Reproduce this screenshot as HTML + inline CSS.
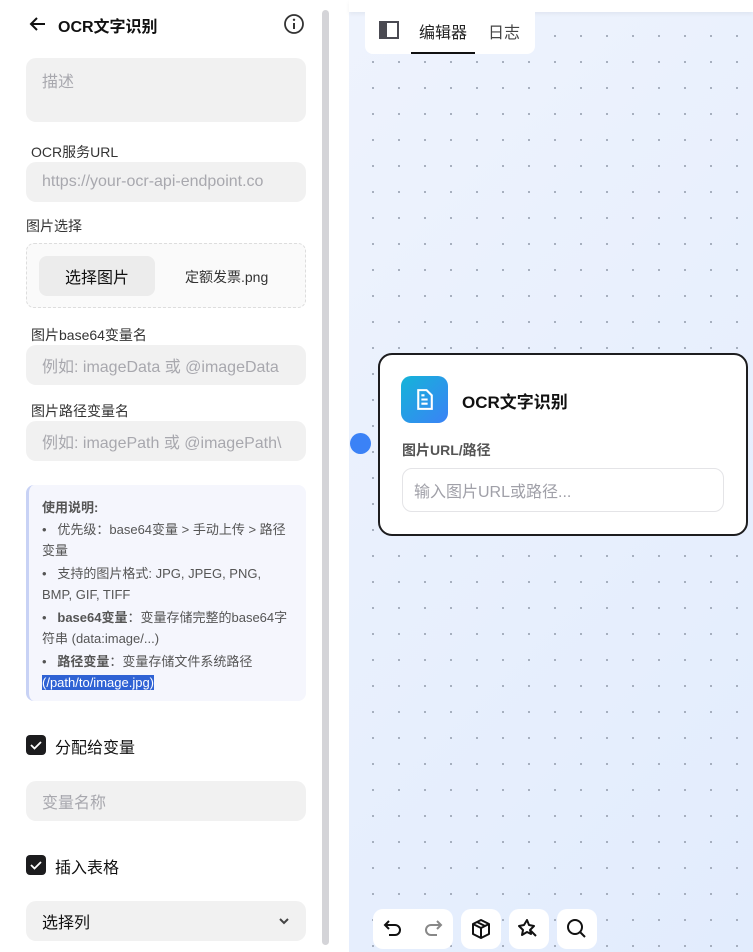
<!DOCTYPE html>
<html><head><meta charset="utf-8"><style>
*{box-sizing:border-box;margin:0;padding:0}
body{width:753px;height:952px;overflow:hidden;background:#fff;font-family:"Liberation Sans","Noto Sans CJK SC",sans-serif;position:relative;color:#222}
.abs{position:absolute}
.inp{position:absolute;left:26px;width:280px;background:#f1f1f1;border-radius:10px;color:#a8a8ae;font-size:16px;padding-left:16px;display:flex;align-items:center;white-space:nowrap;overflow:hidden}
.lbl{position:absolute;font-size:14px;color:#333}
.cb{position:absolute;left:26px;width:20px;height:20px;background:#1c1c1e;border-radius:4px}
.cb svg{display:block}
.canvas{position:absolute;left:349px;top:12px;width:404px;height:940px;background:radial-gradient(circle,#9aa3b3 0.8px,transparent 1.2px) 11px 11px/26px 26px,linear-gradient(135deg,#eef3fd,#e2ecfd)}
.tb{position:absolute;background:#fff;border-radius:10px}
</style></head><body>
<div class="canvas"></div>
<div class="abs" style="left:349px;top:0;width:404px;height:12px;background:#fff;box-shadow:0 2px 4px rgba(0,0,0,.05)"></div>
<svg class="abs" style="left:28px;top:14px" width="20" height="20" viewBox="0 0 20 20"><path d="M17 10H3M9 4L3 10l6 6" stroke="#111" stroke-width="2" fill="none"/></svg>
<div class="abs" style="left:58px;top:13px;font-size:16px;font-weight:bold;color:#111">OCR文字识别</div>
<svg class="abs" style="left:283px;top:13px" width="22" height="22" viewBox="0 0 22 22"><circle cx="11" cy="11" r="9" stroke="#333" stroke-width="1.8" fill="none"/><path d="M11 10v6" stroke="#333" stroke-width="2"/><circle cx="11" cy="6.8" r="1.2" fill="#333"/></svg>
<div class="inp" style="top:58px;height:64px;align-items:flex-start;padding-top:10px">描述</div>
<div class="lbl" style="left:31px;top:142px">OCR服务URL</div>
<div class="inp" style="top:162px;height:40px">https://your-ocr-api-endpoint.co</div>
<div class="lbl" style="left:26px;top:216px">图片选择</div>
<div class="abs" style="left:26px;top:243px;width:280px;height:65px;border:1px dashed #ddd;border-radius:8px;background:#fafafa"></div>
<div class="abs" style="left:39px;top:256px;width:116px;height:40px;background:#ececec;border-radius:8px;font-size:16px;display:flex;align-items:center;justify-content:center;color:#111">选择图片</div>
<div class="abs" style="left:185px;top:267px;font-size:14px;color:#333">定额发票.png</div>
<div class="lbl" style="left:31px;top:325px">图片base64变量名</div>
<div class="inp" style="top:345px;height:40px">例如: imageData 或 @imageData</div>
<div class="lbl" style="left:31px;top:401px">图片路径变量名</div>
<div class="inp" style="top:421px;height:40px">例如: imagePath 或 @imagePath\</div>
<div class="abs" style="left:26px;top:485px;width:280px;height:216px;background:#f5f6fd;border-radius:8px;border-left:3px solid #c8d2f5;padding:12px 17px 0 13px;font-size:13px;color:#555;line-height:21px">
<div style="font-weight:bold;margin-bottom:1px">使用说明:</div>
<div style="margin-bottom:2px">•&nbsp;&nbsp;&nbsp;优先级：base64变量 &gt; 手动上传 &gt; 路径变量</div>
<div style="margin-bottom:2px">•&nbsp;&nbsp;&nbsp;支持的图片格式: JPG, JPEG, PNG, BMP, GIF, TIFF</div>
<div style="margin-bottom:2px">•&nbsp;&nbsp;&nbsp;<b>base64变量</b>：变量存储完整的base64字符串 (data:image/...)</div>
<div>•&nbsp;&nbsp;&nbsp;<b>路径变量</b>：变量存储文件系统路径 <span style="background:#2f62d4;color:#fff">(/path/to/image.jpg)</span></div>
</div>
<div class="cb" style="top:735px"><svg width="20" height="20"><path d="M5 10l3.5 3.5L15 7" stroke="#fff" stroke-width="1.8" fill="none"/></svg></div>
<div class="abs" style="left:55px;top:734px;font-size:16px;color:#111">分配给变量</div>
<div class="inp" style="top:781px;height:40px">变量名称</div>
<div class="cb" style="top:855px"><svg width="20" height="20"><path d="M5 10l3.5 3.5L15 7" stroke="#fff" stroke-width="1.8" fill="none"/></svg></div>
<div class="abs" style="left:55px;top:854px;font-size:16px;color:#111">插入表格</div>
<div class="inp" style="top:901px;height:40px;color:#111">选择列</div>
<svg class="abs" style="left:278px;top:915px" width="12" height="12"><path d="M2 4l4 4 4-4" stroke="#444" stroke-width="2" fill="none"/></svg>
<div class="abs" style="left:322px;top:10px;width:7px;height:935px;background:#d4d4d8;border-radius:4px"></div>
<div class="tb" style="left:365px;top:10px;width:170px;height:44px;border-radius:0 0 8px 8px"></div>
<div class="abs" style="left:379px;top:21px;width:20px;height:18px;border:2px solid #4a4a52;border-left-width:8px"></div>
<div class="abs" style="left:419px;top:19px;font-size:16px;color:#222">编辑器</div>
<div class="abs" style="left:411px;top:52px;width:64px;height:2px;background:#111"></div>
<div class="abs" style="left:488px;top:19px;font-size:16px;color:#444">日志</div>
<div class="abs" style="left:378px;top:353px;width:370px;height:183px;background:#fff;border:2.5px solid #1d1d1f;border-radius:14px"></div>
<div class="abs" style="left:350px;top:433px;width:21px;height:21px;border-radius:50%;background:#3b82f6"></div>
<div class="abs" style="left:401px;top:376px;width:47px;height:47px;border-radius:10px;background:linear-gradient(135deg,#14b4d8,#3b82f6)"></div>
<svg class="abs" style="left:412px;top:387px" width="25" height="25" viewBox="0 0 24 24"><path d="M6 3h8l5 5v13H6z" fill="none" stroke="#fff" stroke-width="2"/><path d="M9 12h6M9 16h6M9 8h3" stroke="#fff" stroke-width="2"/></svg>
<div class="abs" style="left:462px;top:388px;font-size:17px;font-weight:bold;color:#111">OCR文字识别</div>
<div class="abs" style="left:402px;top:440px;font-size:14px;font-weight:bold;color:#555">图片URL/路径</div>
<div class="abs" style="left:402px;top:468px;width:322px;height:44px;border:1px solid #e4e4e7;border-radius:10px;padding-left:11px;display:flex;align-items:center;font-size:16px;color:#a0a0a8">输入图片URL或路径...</div>
<div class="tb" style="left:373px;top:909px;width:80px;height:40px"></div>
<svg class="abs" style="left:381px;top:917px" width="24" height="24" viewBox="0 0 24 24"><path d="M8 4L4 8l4 4M4 8h10a5 5 0 010 10H8" stroke="#111" stroke-width="2" fill="none"/></svg>
<svg class="abs" style="left:421px;top:917px" width="24" height="24" viewBox="0 0 24 24"><path d="M16 4l4 4-4 4M20 8H10a5 5 0 000 10h6" stroke="#888" stroke-width="2" fill="none"/></svg>
<div class="tb" style="left:461px;top:909px;width:40px;height:40px"></div>
<svg class="abs" style="left:469px;top:917px" width="24" height="24" viewBox="0 0 24 24"><path d="M12 3l8 4v10l-8 4-8-4V7z M4 7l8 4 8-4M12 11v10M8 5l8 4" stroke="#111" stroke-width="2" fill="none" stroke-linejoin="round"/></svg>
<div class="tb" style="left:509px;top:909px;width:40px;height:40px"></div>
<svg class="abs" style="left:517px;top:917px" width="24" height="24" viewBox="0 0 24 24"><path d="M10 3l2 5 5 1-4 4 1 4-4-2-5 3 1-5-4-4 5-1z M13 13l6 6" stroke="#111" stroke-width="2" fill="none" stroke-linejoin="round"/></svg>
<div class="tb" style="left:557px;top:909px;width:40px;height:40px"></div>
<svg class="abs" style="left:565px;top:917px" width="24" height="24" viewBox="0 0 24 24"><circle cx="10" cy="10" r="7" stroke="#111" stroke-width="2" fill="none"/><path d="M15 15l5 5" stroke="#111" stroke-width="2"/></svg>
</body></html>
